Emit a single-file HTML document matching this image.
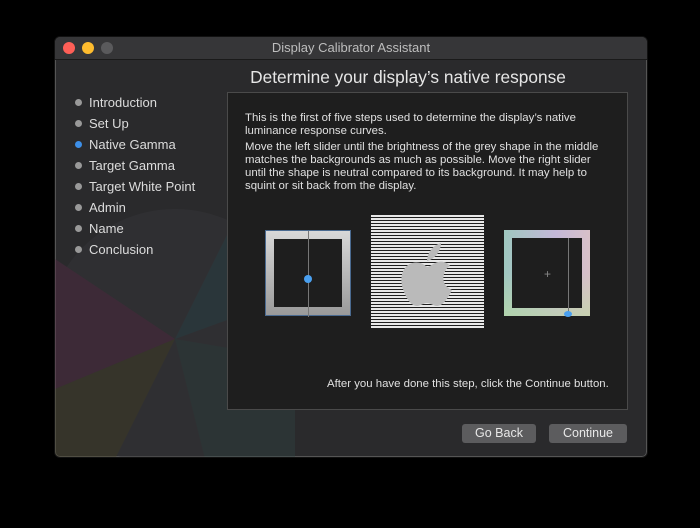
<!DOCTYPE html>
<html><head><style>
body{margin:0;width:700px;height:528px;background:#000;overflow:hidden;font-family:"Liberation Sans",sans-serif;}
.win{position:absolute;left:54px;top:36px;width:592px;height:420px;background:#2a2a2c;border-radius:6px;border:1px solid #111;overflow:hidden;box-shadow:0 0 0 1px #555 inset}
.tb{position:absolute;left:0;top:0;width:100%;height:22px;background:#363638;border-bottom:1px solid #1a1a1a;text-align:center;color:#bdbdbd;font-size:13px;line-height:22px}
.dot{position:absolute;top:5px;width:12px;height:12px;border-radius:50%}
.h{position:absolute;left:192px;width:322px;top:30px;text-align:center;color:#e6e6e6;font-size:17.3px;white-space:nowrap}
.nav{position:absolute;left:20px;top:58px;color:#dcdcdc;font-size:13px}
.nav div{height:21px;line-height:15px;position:relative;padding-left:14px}
.nav div:before{content:"";position:absolute;left:0;top:4px;width:7px;height:7px;border-radius:50%;background:#999}
.nav div.a:before{background:#3d8fe8}
.panel{position:absolute;left:172px;top:55px;width:399px;height:316px;background:#1e1e1e;border:1px solid #4a4a4a}
.t{position:absolute;left:17px;color:#e0e0e0;font-size:11.4px;line-height:13px;white-space:nowrap}
.btn{position:absolute;top:387px;height:19px;background:#5c5c5e;border-radius:3px;color:#e8e8e8;font-size:12.5px;line-height:19px;text-align:center}
</style></head><body>
<div class="win">
<svg style="position:absolute;left:0;top:22px;opacity:.4" width="320" height="400">
<circle cx="120" cy="280" r="130" fill="#38383c"/>
<path d="M120 280 L0 200 L0 330 Z" fill="#5a2c48"/>
<path d="M120 280 L180 160 A140 140 0 0 1 230 240 Z" fill="#2c4a50"/>
<path d="M120 280 L0 330 L0 400 L60 400 Z" fill="#4a4428"/>
<path d="M120 280 L240 300 L240 400 L150 400 Z" fill="#304444"/>
</svg>
<div class="tb">Display Calibrator Assistant</div>
<div class="dot" style="left:8px;background:#fe5f57"></div>
<div class="dot" style="left:27px;background:#febc2e"></div>
<div class="dot" style="left:46px;background:#5a5a5c"></div>
<div class="h">Determine your display’s native response</div>
<div class="nav">
<div>Introduction</div><div>Set Up</div><div class="a">Native Gamma</div><div>Target Gamma</div><div>Target White Point</div><div>Admin</div><div>Name</div><div>Conclusion</div>
</div>
<div class="panel">
<div class="t" style="top:19px">This is the first of five steps used to determine the display’s native<br>luminance response curves.</div>
<div class="t" style="top:48px">Move the left slider until the brightness of the grey shape in the middle<br>matches the backgrounds as much as possible. Move the right slider<br>until the shape is neutral compared to its background. It may help to<br>squint or sit back from the display.</div>
<div style="position:absolute;left:37px;top:137px;width:86px;height:86px;background:linear-gradient(#d8d8d8,#9a9a9a);border:1px solid #4a6a90;box-sizing:border-box"><div style="position:absolute;left:8px;top:8px;width:68px;height:68px;background:#1e1e1e"></div><div style="position:absolute;left:42px;top:0;width:1px;height:86px;background:#777"></div><div style="position:absolute;left:38px;top:44px;width:8px;height:8px;border-radius:50%;background:#4aa0f0"></div></div>
<div style="position:absolute;left:143px;top:122px;width:113px;height:114px;background:repeating-linear-gradient(#e8e8e8 0 2px,#1e1e1e 2px 3px)"><svg width="113" height="114"><path d="M56 46 C56 38 62 30 70 28 C70 36 64 44 56 46 Z" fill="#bababa"/><path d="M56 52 C51 47 43 46 37 50 C30 55 29 66 32 74 C35 83 40 91 46 91 C50 91 52 88 56 88 C60 88 62 91 66 91 C72 91 77 83 81 75 C74 72 71 66 73 59 C74 55 77 52 79 51 C76 47 71 46 67 47 C62 48 59 52 56 52 Z" fill="#bababa"/></svg></div>
<div style="position:absolute;left:276px;top:137px;width:86px;height:86px;background:linear-gradient(90deg,#9fc8c0,#c4b8d8 60%,#d8c0c8),#aaa;box-sizing:border-box"><div style="position:absolute;left:0;top:0;width:86px;height:86px;background:linear-gradient(transparent 50%,rgba(190,220,160,.6))"></div><div style="position:absolute;left:8px;top:8px;width:70px;height:70px;background:#1e1e1e"></div><div style="position:absolute;left:64px;top:8px;width:1px;height:78px;background:#777"></div><div style="position:absolute;left:40px;top:40px;color:#888;font-size:12px;line-height:8px">+</div><div style="position:absolute;left:60px;top:81px;width:8px;height:6px;border-radius:50%;background:#4aa0f0"></div></div>
<div class="t" style="top:285px;left:99px">After you have done this step, click the Continue button.</div>
</div>
<div class="btn" style="left:407px;width:74px">Go Back</div>
<div class="btn" style="left:494px;width:78px">Continue</div>
</div>
</body></html>
